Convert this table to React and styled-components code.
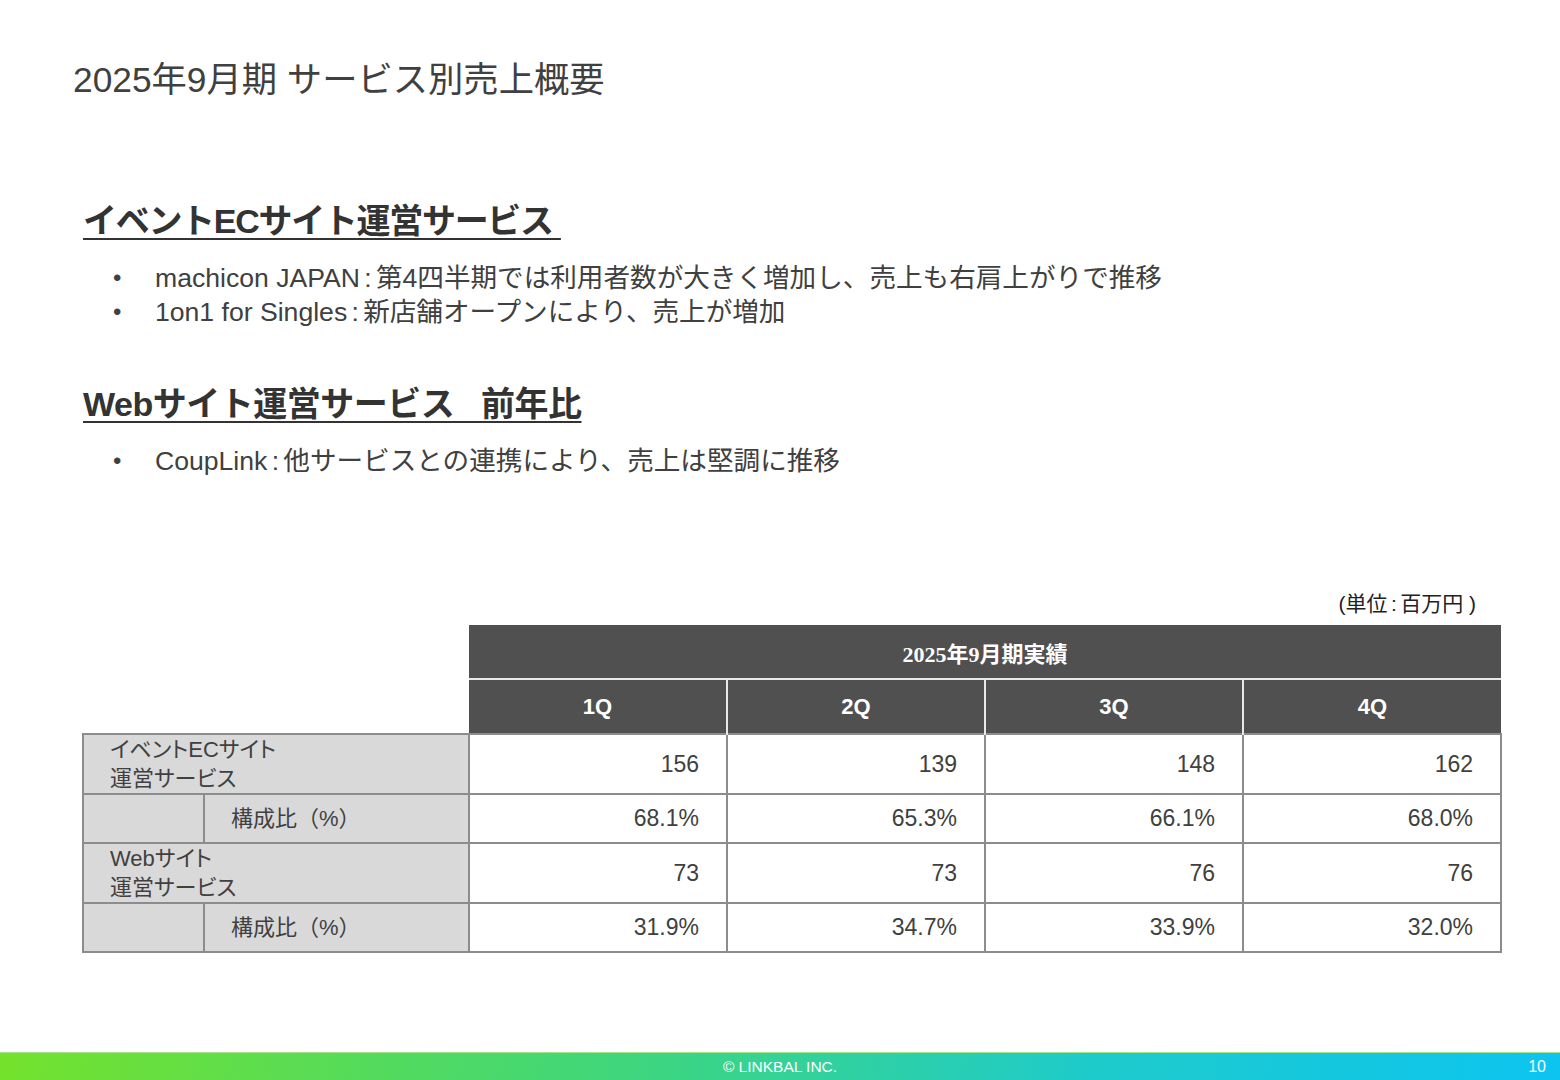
import React from 'react';
import styled, { createGlobalStyle } from 'styled-components';

const GlobalStyle = createGlobalStyle`
  html, body {
    margin: 0;
    padding: 0;
    background: #fff;
  }
  body {
    font-family: "Liberation Sans", "Noto Sans CJK JP", sans-serif;
    color: #404040;
  }
`;

const Page = styled.div`
  width: 1560px;
  height: 1080px;
  display: flex;
  flex-direction: column;
  overflow: hidden;
`;

const Main = styled.main`
  flex: 1;
  padding: 59px 0 0 73px;
`;

const Title = styled.h1`
  margin: 0;
  font-size: 35.3px;
  line-height: 42px;
  font-weight: 400;
  color: #404040;
`;

const Section = styled.section`
  padding-left: 10px;
  margin-top: ${p => p.$top}px;
`;

const Heading = styled.h2`
  margin: 0;
  font-size: 34px;
  line-height: 40px;
  font-weight: 700;
  color: #333;
  white-space: pre;
  letter-spacing: ${p => p.$tight}px;
  text-decoration: underline;
  text-decoration-thickness: 2px;
  text-underline-offset: 5px;
`;

const BulletList = styled.ul`
  list-style: none;
  margin: 20px 0 0;
  padding: 0;
`;

const BulletItem = styled.li`
  display: flex;
  font-size: 26.6px;
  line-height: 34px;
  color: #404040;
`;

const Dot = styled.span`
  width: 42px;
  margin-left: 30px;
  flex-shrink: 0;
  font-size: 24px;
`;

const Colon = styled.span`
  display: inline-block;
  width: 0.6em;
  text-align: center;
`;

const TableBlock = styled.div`
  width: 1418px;
  margin: 112px 0 0 9px;
`;

const Unit = styled.div`
  text-align: right;
  padding-right: 24px;
  font-size: 21px;
  line-height: 28px;
  color: #222;
  margin-bottom: 7px;
`;

const Table = styled.table`
  border-collapse: collapse;
  table-layout: fixed;
  width: 1418px;
  font-size: 22px;
  color: #404040;
`;

const Corner = styled.td`
  border: none;
  background: #fff;
`;

const PeriodCell = styled.th`
  height: 53px;
  padding: 0;
  background: #505050;
  color: #fff;
  font-family: "Liberation Serif", "Noto Sans CJK JP", serif;
  font-weight: 700;
  font-size: 22px;
  border-bottom: 2px solid #e8e8e8;
`;

const QuarterCell = styled.th`
  height: 53px;
  padding: 0;
  background: #505050;
  color: #fff;
  font-weight: 700;
  font-size: 22px;
  border-left: 2px solid #e8e8e8;
  &:nth-child(2) {
    border-left: none;
  }
`;

const LabelCell = styled.td`
  padding: 0 0 0 ${p => p.$pad}px;
  background: #d9d9d9;
  border: 2px solid #8c8c8c;
  line-height: 29px;
  vertical-align: middle;
  font-feature-settings: ${p => (p.$palt ? '"palt"' : 'normal')};
`;

const BlankLabel = styled.td`
  background: #d9d9d9;
  border: 2px solid #8c8c8c;
  border-top: 2px solid #dde1ea;
`;

const ValueCell = styled.td`
  height: ${p => p.$h}px;
  padding: 0 27px 0 0;
  text-align: right;
  border: 2px solid #8c8c8c;
  background: #fff;
  font-size: 23px;
`;

const Footer = styled.footer`
  height: 27px;
  border-top: 1px solid #a6e38a;
  background: linear-gradient(100deg, #74e22c 0%, #3fd67c 40%, #1ecbcb 70%, #0cc4f0 100%);
  display: grid;
  grid-template-columns: 1fr auto 1fr;
  align-items: center;
  color: #fff;
`;

const Copy = styled.span`
  grid-column: 2;
  font-size: 15.5px;
`;

const PageNo = styled.span`
  grid-column: 3;
  justify-self: end;
  padding-right: 14px;
  font-size: 16px;
`;

const rows = [
  { label: ['イベントECサイト', '運営サービス'], values: ['156', '139', '148', '162'], ratio: ['68.1%', '65.3%', '66.1%', '68.0%'] },
  { label: ['Webサイト', '運営サービス'], values: ['73', '73', '76', '76'], ratio: ['31.9%', '34.7%', '33.9%', '32.0%'] },
];

export default function App() {
  return (
    <Page>
      <GlobalStyle />
      <Main>
        <Title>2025年9月期 サービス別売上概要</Title>

        <Section $top={100}>
          <Heading $tight={-1.3}>{'イベントECサイト運営サービス '}</Heading>
          <BulletList>
            <BulletItem>
              <Dot>•</Dot>
              <span>machicon JAPAN<Colon>:</Colon>第4四半期では利用者数が大きく増加し、売上も右肩上がりで推移</span>
            </BulletItem>
            <BulletItem>
              <Dot>•</Dot>
              <span>1on1 for Singles<Colon>:</Colon>新店舗オープンにより、売上が増加</span>
            </BulletItem>
          </BulletList>
        </Section>

        <Section $top={55}>
          <Heading $tight={-0.5}>{'Webサイト運営サービス   前年比'}</Heading>
          <BulletList>
            <BulletItem>
              <Dot>•</Dot>
              <span>CoupLink<Colon>:</Colon>他サービスとの連携により、売上は堅調に推移</span>
            </BulletItem>
          </BulletList>
        </Section>

        <TableBlock>
          <Unit>(単位<Colon>:</Colon>百万円 )</Unit>
          <Table>
            <colgroup>
              <col style={{ width: 121 }} />
              <col style={{ width: 265 }} />
              <col style={{ width: 258 }} />
              <col style={{ width: 258 }} />
              <col style={{ width: 258 }} />
              <col style={{ width: 258 }} />
            </colgroup>
            <thead>
              <tr>
                <Corner colSpan={2} />
                <PeriodCell colSpan={4}>2025年9月期実績</PeriodCell>
              </tr>
              <tr>
                <Corner colSpan={2} />
                {['1Q', '2Q', '3Q', '4Q'].map(q => (
                  <QuarterCell key={q}>{q}</QuarterCell>
                ))}
              </tr>
            </thead>
            <tbody>
              {rows.map(row => (
                <React.Fragment key={row.label[0]}>
                  <tr>
                    <LabelCell colSpan={2} $pad={26} $palt>
                      {row.label[0]}
                      <br />
                      {row.label[1]}
                    </LabelCell>
                    {row.values.map((v, i) => (
                      <ValueCell key={i} $h={56}>{v}</ValueCell>
                    ))}
                  </tr>
                  <tr>
                    <BlankLabel />
                    <LabelCell $pad={26}>構成比（%）</LabelCell>
                    {row.ratio.map((v, i) => (
                      <ValueCell key={i} $h={47}>{v}</ValueCell>
                    ))}
                  </tr>
                </React.Fragment>
              ))}
            </tbody>
          </Table>
        </TableBlock>
      </Main>
      <Footer>
        <Copy>© LINKBAL INC.</Copy>
        <PageNo>10</PageNo>
      </Footer>
    </Page>
  );
}
